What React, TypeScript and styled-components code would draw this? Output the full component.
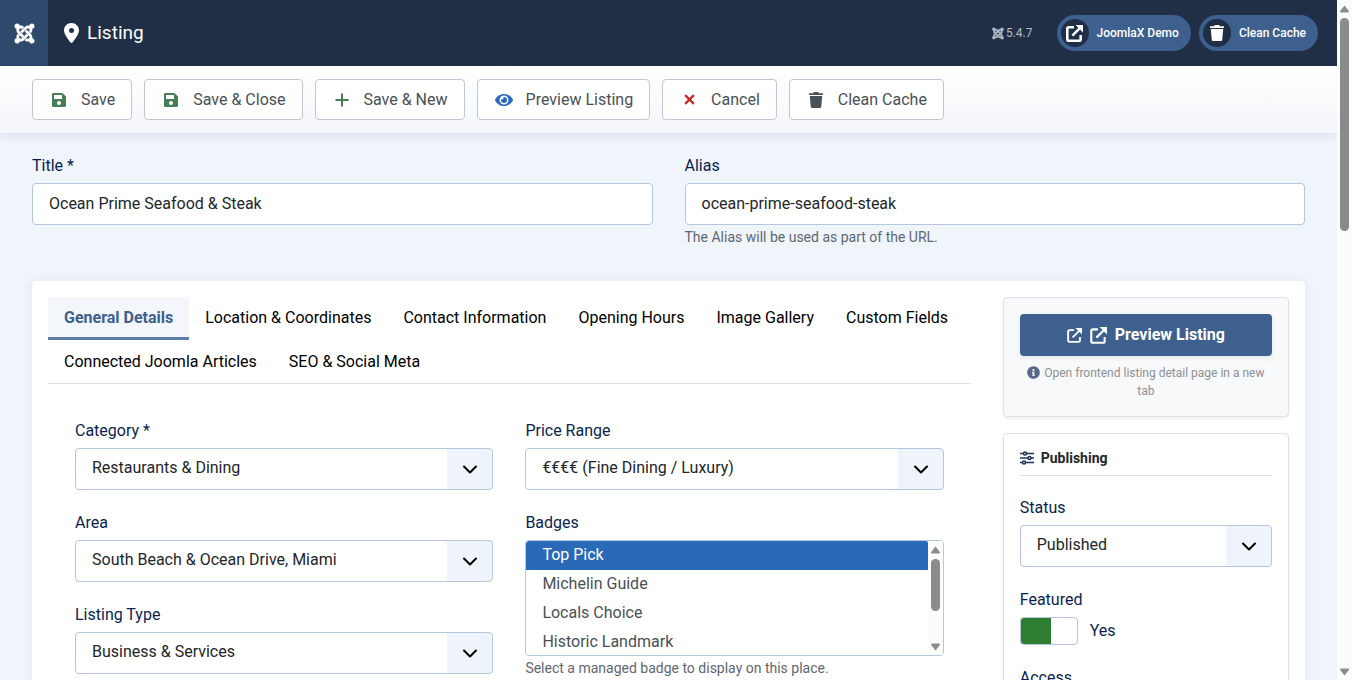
import React from 'react';
import styled, { createGlobalStyle, css } from 'styled-components';
import { FaJoomla, FaInfoCircle, FaEye, FaSave } from 'react-icons/fa';
import { FaLocationDot } from 'react-icons/fa6';

const Global = createGlobalStyle`
  *, *::before, *::after { box-sizing: border-box; }
  html, body, #root { height: 100%; }
  body {
    margin: 0;
    background: #f0f4fb;
    color: #22262a;
    font: 400 16px/24px Roboto, "Liberation Sans", sans-serif;
  }
  button, input, select { font: inherit; }
`;

const Window = styled.div`
  display: grid;
  grid-template-columns: minmax(0, 1fr) 15px;
  height: 100vh;
  overflow: hidden;
`;

const Page = styled.div`
  height: 100vh;
  overflow: hidden;
`;

const Scrollbar = styled.div`
  display: flex;
  flex-direction: column;
  align-items: center;
  background: #fcfcfc;
  padding: 5px 0 4px;
`;

const ScrollArrow = styled.svg`
  display: block;
  flex: none;
  width: 9px;
  height: 8px;
  fill: #8b8b8b;
`;

const ScrollThumb = styled.div<{ $length: number }>`
  flex: none;
  width: 9px;
  height: ${(p) => p.$length}px;
  margin-top: 5px;
  margin-bottom: auto;
  border-radius: 5px;
  background: #8b8b8b;
`;

const Header = styled.header`
  display: flex;
  align-items: center;
  height: 66px;
  padding-right: 19px;
  background: #202f46;
  color: #fff;
`;

const Logo = styled.a`
  display: flex;
  align-items: center;
  justify-content: center;
  align-self: stretch;
  width: 48px;
  background: #2f496d;
  color: #fff;
  font-size: 23px;
`;

const PageTitle = styled.h1`
  display: flex;
  align-items: center;
  gap: 8px;
  margin: 0 auto 0 16px;
  font-size: 19px;
  font-weight: 400;
  line-height: 24px;
  svg {
    width: 15px;
    height: 20px;
  }
`;

const Version = styled.span`
  display: flex;
  align-items: center;
  gap: 2px;
  margin-right: 24px;
  color: #b4bccb;
  font-size: 12px;
  line-height: 16px;
  svg {
    width: 12px;
    height: 13px;
    stroke: currentColor;
    stroke-width: 16px;
  }
`;

const Pill = styled.a`
  display: flex;
  align-items: center;
  gap: 8px;
  height: 36px;
  padding: 0 12px 0 4px;
  border-radius: 18px;
  background: #3d608e;
  color: #fff;
  font-size: 12px;
  font-weight: 500;
  text-decoration: none;
  & + & { margin-left: 8px; }
`;

const PillIcon = styled.span`
  display: flex;
  align-items: center;
  justify-content: center;
  width: 28px;
  height: 28px;
  border-radius: 50%;
  background: #202f46;
`;

const Toolbar = styled.nav`
  display: flex;
  flex-wrap: wrap;
  gap: 12px;
  padding: 13px 32px;
  background: linear-gradient(#fff, #f4f6fa);
  box-shadow: 0 3px 9px rgba(40, 70, 120, 0.1);
`;

const ToolButton = styled.button`
  display: flex;
  align-items: center;
  gap: 12px;
  height: 41px;
  padding: 0 16px;
  border: 1px solid #bfc6d6;
  border-radius: 4px;
  background: #fff;
  color: #495057;
  white-space: nowrap;
`;

const ToolIcon = styled.span<{ $color: string; $size: number }>`
  display: flex;
  align-items: center;
  justify-content: center;
  width: 20px;
  color: ${(p) => p.$color};
  font-size: ${(p) => p.$size}px;
`;

const Main = styled.main`
  display: flex;
  flex-direction: column;
  gap: 32px;
  padding: 21px 32px;
`;

const TwoColumns = styled.div`
  display: grid;
  grid-template-columns: 1fr 1fr;
  gap: 32px;
`;

const Stack = styled.div`
  display: flex;
  flex-direction: column;
  gap: 21px;
`;

const Field = styled.div`
  display: flex;
  flex-direction: column;
`;

const Label = styled.label`
  margin-bottom: 5px;
  color: #0a1f4f;
`;

const control = css`
  width: 100%;
  height: 42px;
  padding: 0 16px 2px;
  border: 1px solid #b5c6df;
  border-radius: 4px;
  background-color: #fff;
  color: #22262a;
`;

const TextInput = styled.input`
  ${control}
`;

const SelectBox = styled.div`
  display: grid;
  align-items: center;
`;

const Select = styled.select`
  ${control}
  grid-area: 1 / 1;
  appearance: none;
  background-image: linear-gradient(#eff3fb, #eff3fb);
  background-position: right;
  background-size: 45px 100%;
  background-repeat: no-repeat;
`;

const Chevron = styled.svg`
  grid-area: 1 / 1;
  justify-self: end;
  width: 16px;
  height: 10px;
  margin-right: 15px;
  margin-top: 2px;
  pointer-events: none;
`;

const Help = styled.small`
  color: #5f6770;
  font-size: 14px;
  line-height: 24px;
`;

const Card = styled.section`
  display: grid;
  grid-template-columns: calc(75% - 8px) minmax(0, 1fr);
  gap: 32px;
  padding: 16px;
  border-radius: 4px;
  background: #fff;
  box-shadow: 0 0 12px rgba(60, 90, 150, 0.08);
`;

const Tabs = styled.div`
  display: flex;
  flex-wrap: wrap;
  row-gap: 1px;
  box-shadow: inset 0 -1px #dce1e9;
`;

const Tab = styled.button<{ $active?: boolean }>`
  padding: 9px 16px 7px;
  border: 0;
  border-bottom: 3px solid ${(p) => (p.$active ? '#5d7ea8' : 'transparent')};
  border-radius: 4px 0 0 0;
  background: ${(p) => (p.$active ? '#f3f6fa' : 'none')};
  color: ${(p) => (p.$active ? '#3d608e' : '#000')};
  font-weight: ${(p) => (p.$active ? 700 : 400)};
  line-height: 24px;
`;

const Panel = styled.div`
  padding: 35px 27px;
`;

const ListBox = styled.div`
  display: grid;
  grid-template-columns: minmax(0, 1fr) 15px;
  height: 116px;
  border: 1px solid #b5c6df;
  border-radius: 4px;
  overflow: hidden;
`;

const MultiSelect = styled.select`
  width: 100%;
  height: 114px;
  padding: 0;
  border: 0;
  outline: 0;
  overflow: hidden;
  background: #fff;
  color: #495057;
`;

const Option = styled.option`
  height: 29px;
  min-height: 29px;
  padding: 4px 16px;
  &:checked {
    background: linear-gradient(#2a69b8, #2a69b8);
    -webkit-text-fill-color: #fff;
  }
`;

const Sidebar = styled.aside`
  display: flex;
  flex-direction: column;
  gap: 16px;
`;

const SideCard = styled.div<{ $tinted?: boolean }>`
  padding: 16px;
  border: 1px solid #dee2e8;
  border-radius: 4px;
  background: ${(p) => (p.$tinted ? '#f8f9fb' : '#fff')};
  box-shadow: 0 2px 4px rgba(0, 0, 0, 0.06);
`;

const PreviewButton = styled.a`
  display: flex;
  align-items: center;
  justify-content: center;
  gap: 8px;
  height: 42px;
  border-radius: 4px;
  background: #3d608e;
  box-shadow: 0 2px 4px rgba(0, 0, 0, 0.08);
  color: #fff;
  font-weight: 700;
  text-decoration: none;
`;

const Note = styled.p`
  margin: 8px 0 0;
  color: #8d9094;
  font-size: 12px;
  line-height: 18px;
  text-align: center;
  svg {
    width: 13px;
    height: 13px;
    margin-right: 4px;
    color: #56698a;
    vertical-align: -2px;
  }
`;

const SideHeading = styled.h2`
  display: flex;
  align-items: center;
  gap: 7px;
  margin: 0 0 20px;
  padding-bottom: 9px;
  border-bottom: 1px solid #dee2e6;
  font-size: 14px;
  font-weight: 700;
  line-height: 16px;
`;

const SwitchRow = styled.div`
  display: flex;
  align-items: center;
  gap: 12px;
  height: 28px;
  color: #0a1f4f;
`;

const Switch = styled.input`
  appearance: none;
  width: 58px;
  height: 28px;
  margin: 0;
  border: 1px solid #b5c6df;
  border-radius: 4px;
  background: linear-gradient(#2f7d32, #2f7d32) left / 30px 100% no-repeat #fff;
`;

function ExternalIcon({ size, weight = 2 }: { size: number; weight?: number }) {
  return (
    <svg width={size} height={size} viewBox="0 0 16 16" fill="none" stroke="currentColor" strokeWidth={weight}>
      <path d="M7.500 2.200H2.700Q1.200 2.200 1.200 3.700V13.300Q1.200 14.800 2.700 14.800H12.300Q13.800 14.800 13.800 13.300V9.500" />
      <path d="M6 10L13 3" />
      <path d="M9 0H16V7Z" fill="currentColor" stroke="none" />
    </svg>
  );
}

function TrashIcon({ size }: { size: number }) {
  return (
    <svg width={size} height={size} viewBox="0 0 16 16" fill="currentColor">
      <path d="M1 1.200H5.500V0H10.500V1.200H15V3H1Z" />
      <path d="M1.800 4H14.200L13.200 15Q13.100 16 12.200 16H3.800Q2.900 16 2.800 15Z" />
    </svg>
  );
}

function PlusIcon() {
  return (
    <svg width="14" height="14" viewBox="0 0 14 14" stroke="currentColor" strokeWidth="2">
      <path d="M7 .5V13.500M.5 7H13.500" />
    </svg>
  );
}

function CrossIcon() {
  return (
    <svg width="11" height="11" viewBox="0 0 12 12" stroke="currentColor" strokeWidth="2.400">
      <path d="M1.200 1.200L10.800 10.800M10.800 1.200L1.200 10.800" />
    </svg>
  );
}

function SlidersIcon() {
  return (
    <svg width="14" height="14" viewBox="0 0 14 14" fill="#fff" stroke="#1f3357" strokeWidth="1.500">
      <path d="M0 2.500H14M0 7H14M0 11.500H14" />
      <circle cx="5" cy="2.500" r="1.500" />
      <circle cx="9.500" cy="7" r="1.500" />
      <circle cx="4" cy="11.500" r="1.500" />
    </svg>
  );
}

function ScrollTrack({ length }: { length: number }) {
  return (
    <Scrollbar aria-hidden="true">
      <ScrollArrow viewBox="0 0 9 8"><path d="M4.500 0.500L9 6.200Q9 7.500 8 7.500H1Q0 7.500 0 6.200Z" /></ScrollArrow>
      <ScrollThumb $length={length} />
      <ScrollArrow viewBox="0 0 9 8"><path d="M4.500 7.500L9 1.800Q9 .5 8 .5H1Q0 .5 0 1.800Z" /></ScrollArrow>
    </Scrollbar>
  );
}

function SelectField({ id, label, value }: { id: string; label: string; value: string }) {
  return (
    <Field>
      <Label htmlFor={id}>{label}</Label>
      <SelectBox>
        <Select id={id} defaultValue={value}>
          <option>{value}</option>
        </Select>
        <Chevron viewBox="0 0 16 10" fill="none" stroke="#000" strokeWidth="2" strokeLinecap="round" strokeLinejoin="round">
          <path d="M2 1.500L8 7.500L14 1.500" />
        </Chevron>
      </SelectBox>
    </Field>
  );
}

const actions = [
  { text: 'Save', icon: <FaSave />, color: '#457d54', size: 16 },
  { text: 'Save & Close', icon: <FaSave />, color: '#457d54', size: 16 },
  { text: 'Save & New', icon: <PlusIcon />, color: '#457d54', size: 16 },
  { text: 'Preview Listing', icon: <FaEye />, color: '#2a69b8', size: 18 },
  { text: 'Cancel', icon: <CrossIcon />, color: '#c52827', size: 16 },
  { text: 'Clean Cache', icon: <TrashIcon size={16} />, color: '#495057', size: 16 },
];

const tabs = [
  'General Details',
  'Location & Coordinates',
  'Contact Information',
  'Opening Hours',
  'Image Gallery',
  'Custom Fields',
  'Connected Joomla Articles',
  'SEO & Social Meta',
];

const badges = ['Top Pick', 'Michelin Guide', 'Locals Choice', 'Historic Landmark'];

export default function App() {
  return (
    <Window>
      <Global />
      <Page>
        <Header>
          <Logo href="#" aria-label="Home Dashboard"><FaJoomla /></Logo>
          <PageTitle><FaLocationDot />Listing</PageTitle>
          <Version><FaJoomla />5.4.7</Version>
          <Pill href="#"><PillIcon><ExternalIcon size={17} weight={2.4} /></PillIcon>JoomlaX Demo</Pill>
          <Pill href="#"><PillIcon><TrashIcon size={16} /></PillIcon>Clean Cache</Pill>
        </Header>
        <Toolbar aria-label="Toolbar">
          {actions.map((a) => (
            <ToolButton key={a.text} type="button">
              <ToolIcon $color={a.color} $size={a.size}>{a.icon}</ToolIcon>
              {a.text}
            </ToolButton>
          ))}
        </Toolbar>
        <Main>
          <TwoColumns>
            <Field>
              <Label htmlFor="title">Title *</Label>
              <TextInput id="title" defaultValue="Ocean Prime Seafood & Steak" />
            </Field>
            <Field>
              <Label htmlFor="alias">Alias</Label>
              <TextInput id="alias" defaultValue="ocean-prime-seafood-steak" />
              <Help>The Alias will be used as part of the URL.</Help>
            </Field>
          </TwoColumns>
          <Card>
            <div>
              <Tabs role="tablist">
                {tabs.map((t, i) => (
                  <Tab key={t} type="button" role="tab" aria-selected={i === 0} $active={i === 0}>{t}</Tab>
                ))}
              </Tabs>
              <Panel role="tabpanel">
                <TwoColumns>
                  <Stack>
                    <SelectField id="category" label="Category *" value="Restaurants & Dining" />
                    <SelectField id="area" label="Area" value="South Beach & Ocean Drive, Miami" />
                    <SelectField id="type" label="Listing Type" value="Business & Services" />
                  </Stack>
                  <Stack>
                    <SelectField id="price" label="Price Range" value="€€€€ (Fine Dining / Luxury)" />
                    <Field>
                      <Label htmlFor="badges">Badges</Label>
                      <ListBox>
                        <MultiSelect id="badges" multiple size={4} defaultValue={['Top Pick']}>
                          {badges.map((b) => <Option key={b}>{b}</Option>)}
                        </MultiSelect>
                        <ScrollTrack length={52} />
                      </ListBox>
                      <Help>Select a managed badge to display on this place.</Help>
                    </Field>
                  </Stack>
                </TwoColumns>
              </Panel>
            </div>
            <Sidebar>
              <SideCard $tinted>
                <PreviewButton href="#">
                  <ExternalIcon size={15} />
                  <ExternalIcon size={17} />
                  Preview Listing
                </PreviewButton>
                <Note><FaInfoCircle />Open frontend listing detail page in a new tab</Note>
              </SideCard>
              <SideCard>
                <SideHeading><SlidersIcon />Publishing</SideHeading>
                <Stack>
                  <SelectField id="status" label="Status" value="Published" />
                  <Field>
                    <Label htmlFor="featured">Featured</Label>
                    <SwitchRow>
                      <Switch id="featured" type="checkbox" role="switch" defaultChecked />
                      <span>Yes</span>
                    </SwitchRow>
                  </Field>
                  <SelectField id="access" label="Access" value="Public" />
                </Stack>
              </SideCard>
            </Sidebar>
          </Card>
        </Main>
      </Page>
      <ScrollTrack length={213} />
    </Window>
  );
}
